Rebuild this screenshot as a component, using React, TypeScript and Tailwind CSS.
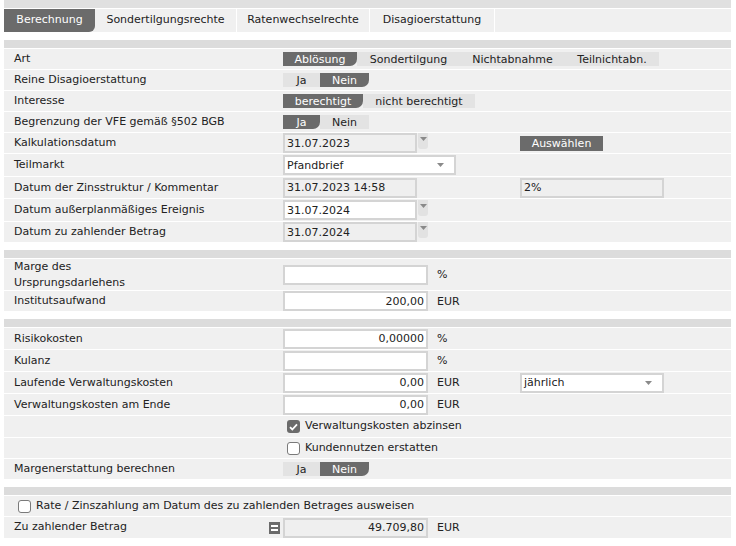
import React from 'react'

type SegItem = { label: string; w: string }

function Segments({ items, active }: { items: SegItem[]; active: number }) {
    return (
        <div className="flex h-[14px]">
            {items.map((it, i) =>
                i === active ? (
                    <div key={it.label} className={`${it.w} h-full bg-[#6b6b6b] text-white rounded-br-[7px] flex items-center justify-center leading-none`}>
                        {it.label}
                    </div>
                ) : (
                    <div key={it.label} className={`${it.w} h-full bg-[#e3e3e3] text-[#222] flex items-center justify-center leading-none`}>
                        {it.label}
                    </div>
                )
            )}
        </div>
    )
}

function Field({ value, className, white, right }: { value?: string; className: string; white?: boolean; right?: boolean }) {
    return (
        <div
            className={`${className} h-[20px] border-2 border-[#d4d4d4] flex items-center px-[2px] leading-none ${white ? 'bg-white' : 'bg-[#efefef]'} ${right ? 'justify-end' : ''}`}
        >
            {value}
        </div>
    )
}

function Caret() {
    return (
        <svg width="7" height="4" viewBox="0 0 7 4" className="shrink-0">
            <path d="M0 0h7L3.5 4z" fill="#8a8a8a" />
        </svg>
    )
}

function DateField({ value, white }: { value: string; white?: boolean }) {
    return (
        <div className="flex items-start h-[20px]">
            <Field value={value} className="w-[134px]" white={white} />
            <div className="ml-[1px] w-[10px] h-[16px] bg-[#e2e2e2] rounded-b-[3px] flex justify-center pt-[4px]">
                <Caret />
            </div>
        </div>
    )
}

function Select({ value, className }: { value: string; className: string }) {
    return (
        <div className={`${className} h-[20px] border-2 border-[#d4d4d4] bg-white flex items-center justify-between pl-[2px] pr-[10px] leading-none`}>
            <span>{value}</span>
            <Caret />
        </div>
    )
}

function Check({ checked }: { checked?: boolean }) {
    return checked ? (
        <div className="w-[13px] h-[13px] rounded-[3px] bg-[#6b6b6b] flex items-center justify-center shrink-0">
            <svg width="9" height="8" viewBox="0 0 9 8">
                <path d="M1 4.2l2.3 2.3L8 1.3" stroke="white" strokeWidth="1.8" fill="none" />
            </svg>
        </div>
    ) : (
        <div className="w-[13px] h-[13px] rounded-[3px] bg-white border border-[#7a7a7a] shrink-0" />
    )
}

function Row({ label, h, children }: { label?: React.ReactNode; h: string; children?: React.ReactNode }) {
    return (
        <div className={`flex items-center ${h} bg-[#f0f0f0] border-t border-white`}>
            <div className="w-[279px] shrink-0 pl-[10px] leading-[16px]">{label}</div>
            <div className="flex items-center">{children}</div>
        </div>
    )
}

function Unit({ children }: { children: React.ReactNode }) {
    return <span className="ml-[9px] leading-none">{children}</span>
}

function Header() {
    return <div className="mt-[8px] h-[8px] bg-[#dcdcdc]"></div>
}

const tabs = ['Sondertilgungsrechte', 'Ratenwechselrechte', 'Disagioerstattung']
const tabW = ['w-[142px]', 'w-[133px]', 'w-[125px]']

export default function App() {
    return (
        <div className="w-[736px] h-[546px] bg-white font-['DejaVu_Sans',Verdana,sans-serif] text-[11px] text-[#222]">
            <div className="w-[727px] ml-[4px]">
                <div className="h-[8px] bg-[#e0e0e0]"></div>
                <div className="mt-[1px] h-[23px] flex bg-[#f0f0f0]">
                    <div className="w-[91px] bg-[#6b6b6b] text-white rounded-br-[6px] flex items-center justify-center">Berechnung</div>
                    {tabs.map((t, i) => (
                        <div key={t} className={`${tabW[i]} border-r border-white flex items-center justify-center`}>
                            {t}
                        </div>
                    ))}
                </div>

                {/* Abschnitt 1 */}
                <Header />
                <Row label="Art" h="h-[21px]">
                    <Segments
                        active={0}
                        items={[
                            { label: 'Ablösung', w: 'w-[74px]' },
                            { label: 'Sondertilgung', w: 'w-[103px]' },
                            { label: 'Nichtabnahme', w: 'w-[105px]' },
                            { label: 'Teilnichtabn.', w: 'w-[94px]' },
                        ]}
                    />
                </Row>
                <Row label="Reine Disagioerstattung" h="h-[21px]">
                    <Segments active={1} items={[{ label: 'Ja', w: 'w-[37px]' }, { label: 'Nein', w: 'w-[49px]' }]} />
                </Row>
                <Row label="Interesse" h="h-[21px]">
                    <Segments active={0} items={[{ label: 'berechtigt', w: 'w-[80px]' }, { label: 'nicht berechtigt', w: 'w-[112px]' }]} />
                </Row>
                <Row label="Begrenzung der VFE gemäß §502 BGB" h="h-[21px]">
                    <Segments active={0} items={[{ label: 'Ja', w: 'w-[37px]' }, { label: 'Nein', w: 'w-[49px]' }]} />
                </Row>
                <Row label="Kalkulationsdatum" h="h-[21px]">
                    <div className="w-[237px]">
                        <DateField value="31.07.2023" />
                    </div>
                    <div className="w-[83px] h-[15px] bg-[#6b6b6b] text-white flex items-center justify-center leading-none">Auswählen</div>
                </Row>
                <Row label="Teilmarkt" h="h-[23px]">
                    <Select value="Pfandbrief" className="w-[173px]" />
                </Row>
                <Row label="Datum der Zinsstruktur / Kommentar" h="h-[22px]">
                    <div className="w-[237px]">
                        <Field value="31.07.2023 14:58" className="w-[134px]" />
                    </div>
                    <Field value="2%" className="w-[144px]" />
                </Row>
                <Row label="Datum außerplanmäßiges Ereignis" h="h-[23px]">
                    <DateField value="31.07.2024" white />
                </Row>
                <Row label="Datum zu zahlender Betrag" h="h-[21px]">
                    <DateField value="31.07.2024" />
                </Row>

                {/* Abschnitt 2 */}
                <Header />
                <Row
                    label={
                        <>
                            Marge des
                            <br />
                            Ursprungsdarlehens
                        </>
                    }
                    h="h-[32px]"
                >
                    <Field className="w-[145px]" white />
                    <Unit>%</Unit>
                </Row>
                <Row label="Institutsaufwand" h="h-[21px]">
                    <Field value="200,00" className="w-[145px]" white right />
                    <Unit>EUR</Unit>
                </Row>

                {/* Abschnitt 3 */}
                <Header />
                <Row label="Risikokosten" h="h-[22px]">
                    <Field value="0,00000" className="w-[145px]" white right />
                    <Unit>%</Unit>
                </Row>
                <Row label="Kulanz" h="h-[22px]">
                    <Field className="w-[145px]" white />
                    <Unit>%</Unit>
                </Row>
                <Row label="Laufende Verwaltungskosten" h="h-[22px]">
                    <div className="w-[237px] flex items-center">
                        <Field value="0,00" className="w-[145px]" white right />
                        <Unit>EUR</Unit>
                    </div>
                    <Select value="jährlich" className="w-[144px]" />
                </Row>
                <Row label="Verwaltungskosten am Ende" h="h-[22px]">
                    <Field value="0,00" className="w-[145px]" white right />
                    <Unit>EUR</Unit>
                </Row>
                <Row h="h-[22px]">
                    <div className="flex items-center gap-[5px] pl-[4px]">
                        <Check checked />
                        <span>Verwaltungskosten abzinsen</span>
                    </div>
                </Row>
                <Row h="h-[21px]">
                    <div className="flex items-center gap-[5px] pl-[4px]">
                        <Check />
                        <span>Kundennutzen erstatten</span>
                    </div>
                </Row>
                <Row label="Margenerstattung berechnen" h="h-[21px]">
                    <Segments active={1} items={[{ label: 'Ja', w: 'w-[37px]' }, { label: 'Nein', w: 'w-[49px]' }]} />
                </Row>

                {/* Abschnitt 4 */}
                <Header />
                <div className="flex items-center h-[21px] bg-[#f0f0f0] border-t border-white pl-[14px] gap-[5px]">
                    <Check />
                    <span>Rate / Zinszahlung am Datum des zu zahlenden Betrages ausweisen</span>
                </div>
                <div className="flex items-center h-[22px] bg-[#f0f0f0] border-t border-white">
                    <div className="w-[279px] shrink-0 pl-[10px] pr-[3px] flex items-center justify-between">
                        <span>Zu zahlender Betrag</span>
                        <div className="w-[11px] h-[12px] bg-[#6b6b6b] flex flex-col items-center justify-center gap-[2px]">
                            <div className="w-[7px] h-[2px] bg-white"></div>
                            <div className="w-[7px] h-[2px] bg-white"></div>
                        </div>
                    </div>
                    <Field value="49.709,80" className="w-[145px]" right />
                    <Unit>EUR</Unit>
                </div>
            </div>
        </div>
    )
}
